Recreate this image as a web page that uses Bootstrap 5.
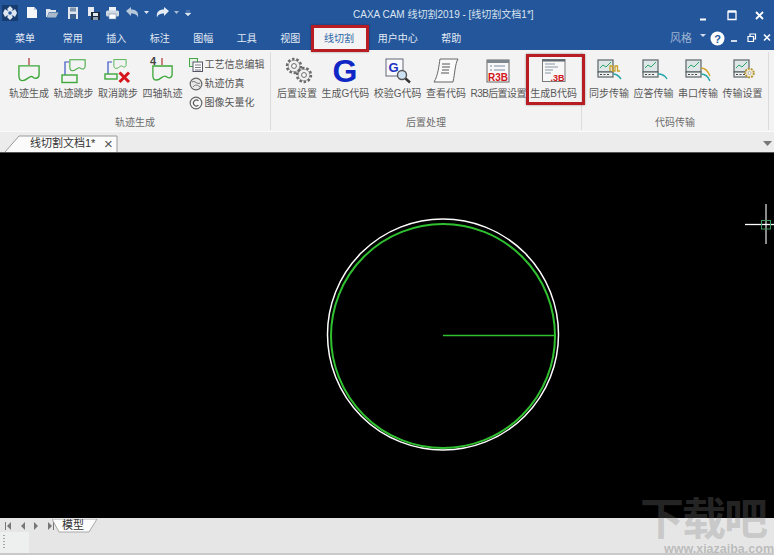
<!DOCTYPE html>
<html lang="zh">
<head>
<meta charset="utf-8">
<title>CAXA CAM 线切割2019</title>
<link rel="stylesheet" href="https://cdn.jsdelivr.net/npm/bootstrap@5.3.0/dist/css/bootstrap.min.css">
<style>
html,body{margin:0;height:100%;overflow:hidden}
body{font-family:"Liberation Sans","Noto Sans CJK SC",sans-serif;font-size:10px;color:#555;background:#e6e6e6}
.app{width:774px;height:555px;position:relative}
.blue-head{background:#24569b;color:#dfe8f3}
.title-row{height:26px}
.qa{width:187px;padding-left:2px}
.qa svg{display:block;flex:none}
.title-text{left:353px;top:8px;font-size:10px;line-height:14px;color:#dbe5f1;white-space:nowrap;position:absolute}
.tab-row{height:24px;padding-left:15px}
.rtab{padding:0 11.75px;line-height:26px;height:24px;color:#e3ebf5;font-size:10px;white-space:nowrap;position:relative}
.rtab.first{padding:0 16px 0 0}
.rtab.on{background:#f3f3f3;color:#2a63a6;margin:0 0 0 -1px;padding:0 12px 0 13px}
.rtab.on::after{content:"";position:absolute;left:0;top:-1px;right:-3px;bottom:-2px;border:3px solid #b81d24;box-shadow:0 0 2px #0006}
.ribbon{height:82px;background:#f3f3f3;border-bottom:1px solid #fafafa}
.rgroup{border-right:1px solid #dcdcdc;height:78px;margin-top:2px;position:relative;flex:none}
.g1{width:271px;padding-left:9px}
.g2{width:311px;padding-left:6px}
.g3{width:187px;padding-left:7px}
.glabel{position:absolute;left:0;right:0;top:64px;text-align:center;color:#6c6c6c;line-height:14px}
.rbtn{display:flex;flex-direction:column;align-items:center;flex:none;position:relative;white-space:nowrap;line-height:14px;color:#595959}
.rbtn svg{display:block;width:32px;height:32px;overflow:visible}
.rbtn.tight{letter-spacing:-.6px}
.rbtn.hl::after{content:"";position:absolute;left:-4px;top:-1px;right:-8px;bottom:-4px;border:3px solid #b81d24;box-shadow:0 0 2px #0006}
.btn-row{padding-top:3px;gap:4.5px;align-items:flex-start}
.mini{margin-left:1.500px;padding-top:2px;gap:3px}
.mini-item{height:16px;line-height:16px;gap:2px;white-space:nowrap}
.mini-item svg{width:14px;height:14px;flex:none}
.docbar{height:20px;background:#ececec;position:relative}
.doctab{position:absolute;left:5px;top:3px;width:113px;height:17px}
.doctab svg{position:absolute;left:0;top:0}
.doctab b{position:relative;font-weight:400;font-size:11px;color:#333;margin-left:25px;line-height:17px}
.doctab i{position:absolute;left:99px;top:0;font-style:normal;font-size:15px;line-height:17px;color:#555}
.canvas-area{height:366px;background:#000;border-top:1px solid #555}
.canvas-area svg{display:block}
.foot{height:37px;background:#e6e6e6;position:relative;border-bottom:2px solid #c9c9c9}
.navs{height:16px;padding-left:3px}
.navs svg{display:block}
.modeltab{position:absolute;left:52px;top:0}
.modeltab span{position:absolute;left:10px;top:0;line-height:14px;font-size:11px;color:#333;white-space:nowrap}
.grip{width:29px;height:21px;background:#eef0ef;position:absolute;left:0;top:14px}
.grip svg{display:block}
.mark1{position:absolute;left:640px;top:497px;font-size:44px;line-height:46px;font-weight:700;letter-spacing:-2px;color:rgba(128,128,128,.3);white-space:nowrap}
.mark2{position:absolute;left:664px;top:543px;font-size:12.5px;line-height:12px;font-weight:700;color:rgba(128,128,128,.42);white-space:nowrap}
</style>
</head>
<body>
<svg width="0" height="0" class="d-block position-absolute">
  <defs>
    <symbol id="mon" viewBox="0 0 32 32">
      <rect x="5" y="5" width="15" height="12" fill="#dfe6e8" stroke="#5b6468" stroke-width="1.200"/>
      <path d="M7 13l3-3 3 2 5-5" fill="none" stroke="#2aa56a" stroke-width="1"/>
      <rect x="5" y="17" width="15" height="5" fill="#eef0f0" stroke="#5b6468" stroke-width="1.200"/>
      <path d="M7 19.500h2M10.500 19.500h2M14 19.500h2" stroke="#444" stroke-width="1.100"/>
    </symbol>
    <symbol id="cut" viewBox="0 0 24 18" overflow="visible">
      <path d="M1 1H23V10C23 15 19 15.500 16 13C13 10.500 10 17 5 17C2.500 17 1 15 1 12Z" fill="none" stroke="#3da83a" stroke-width="1.500"/>
    </symbol>
  </defs>
</svg>
<div class="app d-flex flex-column">
  <div class="blue-head">
    <div class="title-row d-flex align-items-center position-relative">
      <div class="qa d-flex align-items-center">
        <svg width="16" height="16" viewBox="0 0 16 16"><rect width="16" height="16" fill="#173d70"/><path d="M8 1l3 3-1.500 1.500H11L13 4l2 4-2 4-2-1.500H9.500L11 12l-3 3-3-3 1.500-1.500H5L3 12 1 8l2-4 2 1.500h1.500L5 4z" fill="#dfe7f0"/><circle cx="8" cy="8" r="1.800" fill="#24569b"/></svg>
        <svg width="14" height="14" viewBox="0 0 14 14" style="margin-left:7px"><path d="M2 1h7l3 3v8H2z" fill="#f4f6f8"/><path d="M9 1v3h3" fill="#b9c6d6"/></svg>
        <svg width="14" height="14" viewBox="0 0 14 14" style="margin-left:6px"><path d="M1 3h4l1 1h5v2H4l-2 5H1z" fill="#dfe6ee"/><path d="M4 6.500h9.500L11 11.500H2z" fill="#a9b9cc"/></svg>
        <svg width="14" height="14" viewBox="0 0 14 14" style="margin-left:7px"><path d="M2 1h10v12H2z" fill="#dfe6ee"/><rect x="4" y="1.500" width="6" height="4" fill="#7e93ad"/><rect x="4" y="8" width="6" height="5" fill="#3b5f8d"/></svg>
        <svg width="15" height="15" viewBox="0 0 15 15" style="margin-left:6px"><path d="M2 1h6v9H2z" fill="#e6ebf1"/><rect x="5" y="6" width="9" height="8" fill="#1b2a3a"/><rect x="7" y="7" width="5" height="3" fill="#dfe6ee"/><rect x="7" y="11" width="5" height="3" fill="#8ea2b8"/></svg>
        <svg width="15" height="14" viewBox="0 0 15 14" style="margin-left:4px"><rect x="4" y="1" width="7" height="4" fill="#eef2f6"/><rect x="1" y="4.500" width="13" height="6" rx="1.500" fill="#cfd9e4"/><rect x="4" y="8" width="7" height="5" fill="#fff" stroke="#6f86a2" stroke-width=".6"/></svg>
        <svg width="15" height="14" viewBox="0 0 15 14" style="margin-left:5px"><path d="M1 5l5-4v2.500c5 0 8 2.500 7 8-1-3-3-4-7-4V10z" fill="#b9c9dc"/></svg>
        <svg width="5" height="4" viewBox="0 0 5 4" style="margin-left:4px"><path d="M0 0h5L2.500 3z" fill="#dfe7f0"/></svg>
        <svg width="15" height="14" viewBox="0 0 15 14" style="margin-left:6px"><path d="M14 5L9 1v2.500c-5 0-8 2.500-7 8 1-3 3-4 7-4V10z" fill="#e6edf5"/></svg>
        <svg width="5" height="4" viewBox="0 0 5 4" style="margin-left:4px"><path d="M0 0h5L2.500 3z" fill="#a9bbd2"/></svg>
        <svg width="6" height="6" viewBox="0 0 6 6" style="margin-left:6px"><path d="M1 1h4M0 3h6L3 6z" fill="#dfe7f0" stroke="#dfe7f0" stroke-width=".4"/></svg>
      </div>
      <div class="title-text">CAXA CAM 线切割2019 - [线切割文档1*]</div>
      <div class="ms-auto d-flex align-items-center" style="padding-right:9px;padding-top:6px">
        <svg width="68" height="14" viewBox="0 0 68 14"><path d="M3 10.500h6" stroke="#fff" stroke-width="2"/><path d="M31 2.500h8v8h-8z" fill="none" stroke="#fff" stroke-width="1.300"/><path d="M31 2.500h8" stroke="#fff" stroke-width="2.200"/><path d="M59 3l7 7M66 3l-7 7" stroke="#fff" stroke-width="1.800"/></svg>
      </div>
    </div>
    <div class="tab-row d-flex position-relative">
      <div class="rtab first">菜单</div>
      <div class="rtab">常用</div><div class="rtab">插入</div><div class="rtab">标注</div><div class="rtab">图幅</div><div class="rtab">工具</div><div class="rtab">视图</div>
      <div class="rtab on">线切割</div>
      <div class="rtab">用户中心</div><div class="rtab">帮助</div>
      <div class="ms-auto d-flex align-items-center" style="padding-right:3px">
        <span style="font-size:11px;color:#9db4d2;line-height:26px;margin-right:1px">风格</span>
        <svg width="6" height="4" viewBox="0 0 6 4" style="margin-left:7px;margin-bottom:4px"><path d="M0 0h6L3 3z" fill="#cfdbea"/></svg>
        <svg width="15" height="15" viewBox="0 0 15 15" style="margin-left:4px"><circle cx="7.500" cy="7.500" r="7" fill="#fff"/><text x="7.500" y="11.500" text-anchor="middle" font-size="11" font-weight="700" font-family="Liberation Sans" fill="#24569b">?</text></svg>
        <svg width="43" height="12" viewBox="0 0 43 12" style="margin-left:3px"><path d="M3 9h6" stroke="#fff" stroke-width="1.600"/><path d="M20 4.500h5.500v5H20zM22 4.500V2h5.500v5H25.500" fill="none" stroke="#fff" stroke-width="1.200"/><path d="M36 2.500l6 6M42 2.500l-6 6" stroke="#fff" stroke-width="1.600"/></svg>
      </div>
    </div>
  </div>

  <div class="ribbon d-flex">
    <div class="rgroup g1 d-flex btn-row">
      <div class="rbtn"><svg viewBox="0 0 32 32"><path d="M16 3v7" stroke="#b3413c" stroke-width="1.300"/><use href="#cut" x="5" y="10" width="22" height="16.500"/></svg>轨迹生成</div>
      <div class="rbtn"><svg viewBox="0 0 32 32"><use href="#cut" x="11" y="4" width="17" height="12.500"/><path d="M11 7H7V20" fill="none" stroke="#3b55c7" stroke-width="1.200"/><rect x="4" y="20" width="15" height="7.500" fill="none" stroke="#3da83a" stroke-width="1.400"/></svg>轨迹跳步</div>
      <div class="rbtn"><svg viewBox="0 0 32 32"><use href="#cut" x="10" y="4" width="16" height="10"/><path d="M10 7H6V19" fill="none" stroke="#3b55c7" stroke-width="1.200"/><rect x="3" y="19" width="12" height="5" fill="none" stroke="#3da83a" stroke-width="1.400"/><path d="M17.500 17.500l9.500 9.500M27 17.500l-9.500 9.500" stroke="#d4161c" stroke-width="3"/></svg>取消跳步</div>
      <div class="rbtn"><svg viewBox="0 0 32 32"><text x="3" y="10" font-size="11" font-weight="700" font-family="Liberation Sans" fill="#444">4</text><path d="M15 3v7" stroke="#b3413c" stroke-width="1.300"/><use href="#cut" x="5" y="10" width="21" height="16"/></svg>四轴轨迹</div>
      <div class="mini d-flex flex-column">
        <div class="mini-item d-flex align-items-center"><svg viewBox="0 0 14 14"><rect x="0.500" y="0.500" width="8" height="8" fill="#e4f3e2" stroke="#46a546"/><rect x="4" y="4" width="9.500" height="9.500" fill="#fff" stroke="#556"/><path d="M6 7h6M6 9.500h6M6 12h6" stroke="#556" stroke-width=".8"/></svg>工艺信息编辑</div>
        <div class="mini-item d-flex align-items-center"><svg viewBox="0 0 14 14"><circle cx="7" cy="7" r="5.800" fill="#e8e8e8" stroke="#666" stroke-width="1.200"/><path d="M3 5c3-2 5 3 8 1M4 10c2-3 5-2 7 0" fill="none" stroke="#777"/></svg>轨迹仿真</div>
        <div class="mini-item d-flex align-items-center"><svg viewBox="0 0 14 14"><circle cx="7" cy="7" r="5.800" fill="#f6f6f6" stroke="#666" stroke-width="1.200"/><path d="M9.500 4.800A3 3 0 1 0 9.500 9.200" fill="none" stroke="#555" stroke-width="1.100"/></svg>图像矢量化</div>
      </div>
      <div class="glabel">轨迹生成</div>
    </div>
    <div class="rgroup g2 d-flex btn-row">
      <div class="rbtn"><svg viewBox="0 0 32 32"><circle cx="13" cy="11" r="6.500" fill="none" stroke="#6a6a6a" stroke-width="3.400" stroke-dasharray="2.300 1.700"/><circle cx="13" cy="11" r="5.800" fill="#f0f0f0" stroke="#777" stroke-width=".6"/><circle cx="13" cy="11" r="2.400" fill="#fff" stroke="#666"/><circle cx="23" cy="20" r="6.500" fill="none" stroke="#6a6a6a" stroke-width="3.400" stroke-dasharray="2.300 1.700"/><circle cx="23" cy="20" r="5.800" fill="#f0f0f0" stroke="#777" stroke-width=".6"/><circle cx="23" cy="20" r="2.400" fill="#fff" stroke="#666"/></svg>后置设置</div>
      <div class="rbtn"><svg viewBox="0 0 32 32"><text x="16" y="27" text-anchor="middle" font-size="32" font-weight="700" font-family="Liberation Sans" fill="#0f27c4">G</text></svg>生成G代码</div>
      <div class="rbtn"><svg viewBox="0 0 32 32"><rect x="4" y="4" width="17" height="17" fill="#f7f9fc" stroke="#667"/><text x="6.500" y="17" font-size="13" font-weight="700" font-family="Liberation Sans" fill="#1b2fc0">G</text><circle cx="20" cy="20" r="4.500" fill="#cfe2f3" stroke="#555" stroke-width="1.400"/><path d="M23.500 23.500l4.500 4" stroke="#333" stroke-width="2.400"/></svg>校验G代码</div>
      <div class="rbtn"><svg viewBox="0 0 32 32"><path d="M10 4H28C25 9 25 18 23 27H4C8 21 9 10 10 4Z" fill="#fafafa" stroke="#666"/><path d="M12 9h8M12 12h8M12 15h7M11 18h8" stroke="#555"/></svg>查看代码</div>
      <div class="rbtn tight"><svg viewBox="0 0 32 32"><rect x="5" y="5" width="22" height="22" fill="#f7f7f7" stroke="#666"/><rect x="5" y="5" width="22" height="3" fill="#7d868c"/><path d="M8 11h2M12 11h11M8 15h2M12 15h11" stroke="#7a8aa0"/><text x="16" y="26" text-anchor="middle" font-size="10" font-weight="700" font-family="Liberation Sans" letter-spacing="0" fill="#d3141a">R3B</text></svg>R3B后置设置</div>
      <div class="rbtn hl"><svg viewBox="0 0 32 32"><rect x="4.500" y="4.500" width="22.500" height="22" fill="#f7f7f7" stroke="#7a7a7a"/><rect x="4.500" y="4.500" width="22.500" height="2" fill="#5d6770"/><path d="M7 9h10M7 12h13M7 15h8M7 18h6" stroke="#8a97a5"/><text x="26.500" y="25.500" text-anchor="end" font-size="9" font-weight="700" font-family="Liberation Sans" fill="#d3141a">.3B</text></svg>生成B代码</div>
      <div class="glabel">后置处理</div>
    </div>
    <div class="rgroup g3 d-flex btn-row">
      <div class="rbtn"><svg viewBox="0 0 32 32"><use href="#mon" width="32" height="32"/><path d="M17 16v-5h2.500v5h2.500v-5h2.500v5h2.500" fill="none" stroke="#c9a227" stroke-width="1.300"/><path d="M20 19c3 0 6 2 8 5" fill="none" stroke="#25a6a8" stroke-width="1.400"/></svg>同步传输</div>
      <div class="rbtn"><svg viewBox="0 0 32 32"><use href="#mon" width="32" height="32"/><path d="M20 19c3 0 7 1.500 9 5" fill="none" stroke="#25a6a8" stroke-width="1.400"/></svg>应答传输</div>
      <div class="rbtn"><svg viewBox="0 0 32 32"><use href="#mon" x="-1" width="32" height="32"/><path d="M19 13c4 0 7 3 9 8" fill="none" stroke="#d3a72a" stroke-width="1.400"/><path d="M19 19c3 0 7 2 9 7" fill="none" stroke="#25a6a8" stroke-width="1.400"/></svg>串口传输</div>
      <div class="rbtn"><svg viewBox="0 0 32 32"><use href="#mon" x="2" width="32" height="32"/><circle cx="22.500" cy="18" r="4.300" fill="#f4efd8" stroke="#b59a3a" stroke-width="2" stroke-dasharray="2 1"/><circle cx="22.500" cy="18" r="1.500" fill="#fff" stroke="#888" stroke-width=".6"/></svg>传输设置</div>
      <div class="glabel">代码传输</div>
    </div>
  </div>

  <div class="docbar">
    <div class="doctab">
      <svg width="113" height="17" viewBox="0 0 113 17"><path d="M0 17L14 1H112V17" fill="#fbfbfb" stroke="#9a9a9a"/></svg>
      <b>线切割文档1*</b><i>×</i>
    </div>
    <svg width="9" height="5" viewBox="0 0 9 5" class="position-absolute" style="left:763px;top:9px"><path d="M0 0h9L4.500 5z" fill="#777"/></svg>
  </div>

  <div class="canvas-area">
    <svg width="774" height="365" viewBox="0 152 774 365">
      <circle cx="443" cy="333.500" r="115.500" fill="none" stroke="#fff" stroke-width="1.500"/>
      <circle cx="443" cy="335" r="112" fill="none" stroke="#2fc02f" stroke-width="2"/>
      <path d="M443 334.500H556" stroke="#2fc02f" stroke-width="1.600"/>
      <path d="M766 203v40" stroke="#8a8a8a" stroke-width="2"/>
      <path d="M745 223.500H774" stroke="#fff" stroke-width="1.300"/>
      <rect x="761.500" y="219.500" width="9" height="8.500" fill="none" stroke="#3f9a5c" stroke-width="1"/>
    </svg>
  </div>

  <div class="foot">
    <div class="navs d-flex align-items-center">
      <svg width="56" height="14" viewBox="0 0 56 14"><g fill="#777"><path d="M2 3h1v8H2zM8 3v8L4 7z"/><path d="M22 3v8L18 7z"/><path d="M31 3v8l4-4z"/><path d="M45 3v8l4-4zM50 3h1v8h-1z"/></g></svg>
    </div>
    <div class="modeltab">
      <svg width="46" height="14" viewBox="0 0 46 14"><path d="M0 0L7 13H37L45 0Z" fill="#fdfdfd" stroke="#a8a8a8"/></svg>
      <span>模型</span>
    </div>
    <div class="grip"><svg width="8" height="21" viewBox="0 0 8 21"><path d="M4 3v1M4 6v1M4 9v1M4 12v1M4 15v1" stroke="#777" stroke-width="1.200"/></svg></div>
  </div>

  <div class="mark1">下载吧</div>
  <div class="mark2">www.xiazaiba.com</div>
</div>
<script src="https://cdn.jsdelivr.net/npm/bootstrap@5.3.0/dist/js/bootstrap.bundle.min.js"></script>
</body>
</html>
